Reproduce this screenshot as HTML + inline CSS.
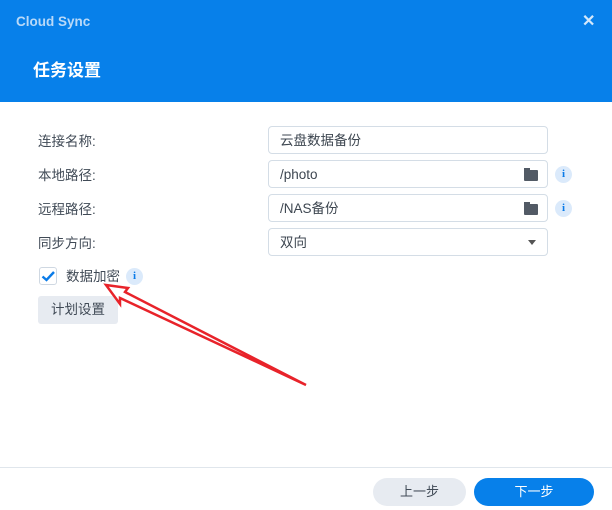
<!DOCTYPE html>
<html><head><meta charset="utf-8"><style>
*{box-sizing:border-box;margin:0;padding:0}
body{width:612px;height:510px;overflow:hidden;background:#fff;font-family:"Liberation Sans","Noto Sans CJK SC",sans-serif;position:relative;color:#333}
.hdr{position:absolute;left:0;top:0;width:612px;height:102px;background:#0780ea}
.t1{position:absolute;left:16px;top:14px;font-size:13.5px;line-height:16px;font-weight:bold;color:#b9d9f8}
.x{position:absolute;left:582px;top:13px;font-size:16px;line-height:18px;font-weight:bold;color:#d4e8fb}
.t2{position:absolute;left:33px;top:60px;font-size:17px;line-height:22px;color:#fff;font-weight:bold}
.lbl{position:absolute;left:38px;font-size:13.5px;line-height:18px;color:#404a56}
.inp{position:absolute;left:268px;width:280px;height:28px;border:1px solid #d4dde6;border-radius:4px;font-size:13.5px;color:#3d4650;padding:0 11px;line-height:28px}
.fold{position:absolute;left:524px;width:14px;height:11px;background:#525a65;border-radius:1px}
.fold:before{content:"";position:absolute;left:0;top:-2px;width:6px;height:3px;background:#525a65}
.info{position:absolute;width:17px;height:17px;border-radius:50%;background:#dbeafb;color:#0a7be8;font-size:11px;font-weight:bold;text-align:center;line-height:17px;font-family:"Liberation Serif",serif}
.btn{position:absolute;border-radius:14px;font-size:13px;text-align:center;line-height:28px}
</style></head><body>
<div class="hdr"><div class="t1">Cloud Sync</div><div class="x">✕</div><div class="t2">任务设置</div></div>
<div class="lbl" style="top:133px">连接名称:</div>
<div class="lbl" style="top:167px">本地路径:</div>
<div class="lbl" style="top:201px">远程路径:</div>
<div class="lbl" style="top:235px">同步方向:</div>
<div class="inp" style="top:126px">云盘数据备份</div>
<div class="inp" style="top:160px">/photo</div>
<div class="inp" style="top:194px">/NAS备份</div>
<div class="inp" style="top:228px">双向</div>
<div class="fold" style="top:170px"></div>
<div class="fold" style="top:204px"></div>
<div style="position:absolute;left:528px;top:240px;border-left:4px solid transparent;border-right:4px solid transparent;border-top:5px solid #555"></div>
<div class="info" style="left:555px;top:166px">i</div>
<div class="info" style="left:555px;top:200px">i</div>
<div style="position:absolute;left:39px;top:267px;width:18px;height:18px;border:1px solid #cfd8e2;border-radius:3px"></div>
<svg style="position:absolute;left:39px;top:267px" width="18" height="18"><path d="M3.5 9.5 L7.5 13 L15 5" stroke="#0a7be8" stroke-width="2.4" fill="none"/></svg>
<div class="lbl" style="left:66px;top:268px;color:#404a56">数据加密</div>
<div class="info" style="left:126px;top:268px">i</div>
<div style="position:absolute;left:38px;top:296px;width:80px;height:28px;background:#e7ebf1;border-radius:3px;font-size:13.5px;color:#404a56;text-align:center;line-height:28px">计划设置</div>
<svg style="position:absolute;left:0;top:0" width="612" height="510"><polygon points="106,285 128,288 125,292 306,385 120,298 120,304" fill="#fff" stroke="#e8232a" stroke-width="2.5" stroke-linejoin="miter"/></svg>
<div style="position:absolute;left:0;top:467px;width:612px;height:1px;background:#e0e6ec"></div>
<div class="btn" style="left:373px;top:478px;width:93px;background:#e7ebf1;color:#404a56">上一步</div>
<div class="btn" style="left:474px;top:478px;width:120px;background:#0780ea;color:#fff">下一步</div>
</body></html>
